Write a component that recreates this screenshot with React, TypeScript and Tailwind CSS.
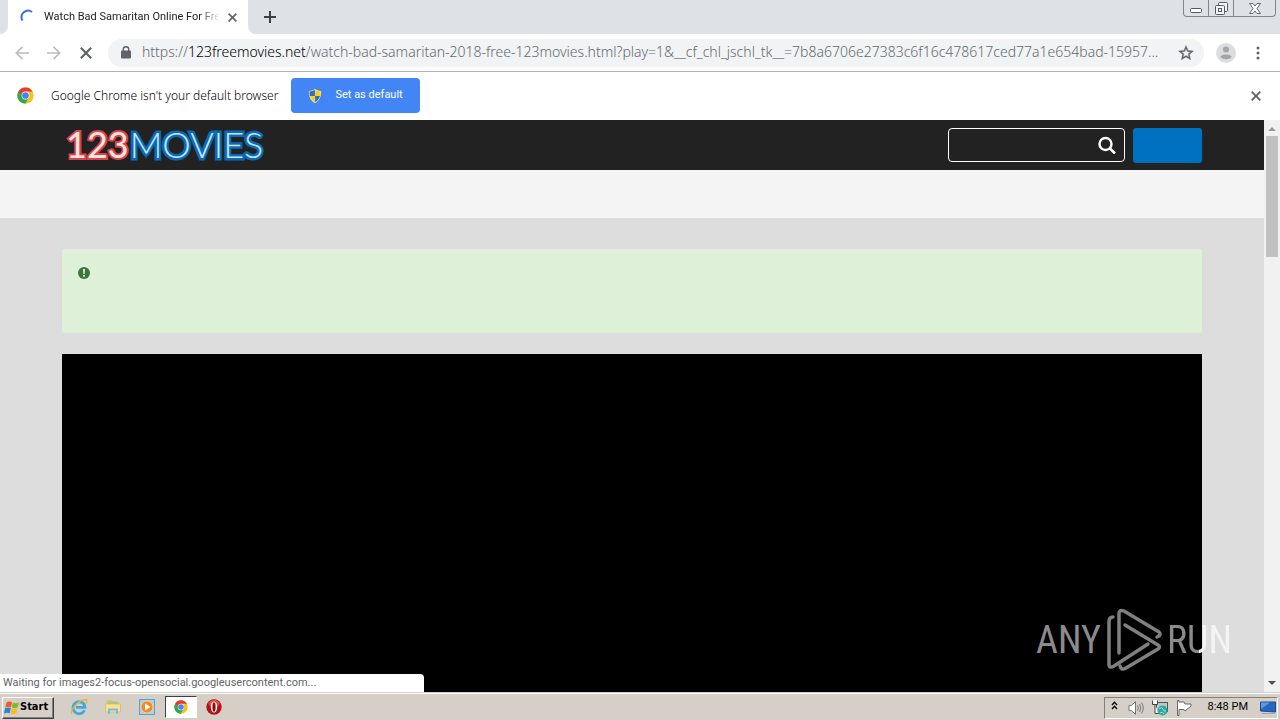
import React from "react";

const UI_FONT = "font-['Roboto','Noto_Sans',sans-serif]";

function ChromeLogo({ className }: { className: string }) {
  return (
    <svg viewBox="0 0 48 48" className={className} aria-hidden="true">
      <circle cx="24" cy="24" r="23" fill="#fbc116" />
      <path d="M24 24 L4 12.5 A23 23 0 0 1 44 13 L24 13Z" fill="#e33b2e" />
      <path d="M4 12.5 A23 23 0 0 0 23 47 L33.5 29.5 L24 24 L14.500 29.500Z" fill="#2da94f" />
      <path d="M4 12.500 L14.500 29.500 L24 24 L24 13Z" fill="#e33b2e" />
      <path d="M4 12.500 L14.500 29.500 L20 26Z" fill="#2da94f" />
      <circle cx="24" cy="24" r="11" fill="#fff" />
      <circle cx="24" cy="24" r="9.500" fill="#4285f4" />
    </svg>
  );
}

function Shield() {
  return (
    <svg viewBox="0 0 16 16" className="size-4" aria-hidden="true">
      <path d="M8 0.500 C6 2 4 2.500 1.500 2.500 C1.200 8.500 3 13 8 15.500 C13 13 14.800 8.500 14.500 2.500 C12 2.500 10 2 8 .5Z" fill="#dfe6ea" stroke="#5d6b73" strokeWidth=".6" />
      <path d="M7.900 1.800 C6.500 2.800 4.500 3.400 2.500 3.500 C2.400 5.200 2.600 6.500 2.900 7.900 H7.900Z" fill="#2c6fc0" />
      <path d="M8.100 1.800 C9.500 2.800 11.500 3.400 13.500 3.500 C13.600 5.200 13.400 6.500 13.100 7.900 H8.100Z" fill="#fcd116" />
      <path d="M7.900 14.300 C5.300 12.800 3.700 10.700 3 8.100 H7.900Z" fill="#fcd116" />
      <path d="M8.100 14.300 C10.700 12.800 12.300 10.700 13 8.100 H8.100Z" fill="#2c6fc0" />
    </svg>
  );
}

function Cross({ className }: { className: string }) {
  return (
    <svg viewBox="0 0 10 10" className={className} fill="none" stroke="currentColor" strokeWidth="1.800" aria-hidden="true">
      <path d="M.7 .7 L9.300 9.300 M9.300 .7 L.7 9.300" />
    </svg>
  );
}

function TabStrip() {
  return (
    <div className="flex h-[34px] shrink-0 items-stretch bg-[#dee1e6] pl-2">
      <div className="relative flex w-60 items-center bg-white pr-[11px] pl-3">
        <svg viewBox="0 0 8 8" className="absolute bottom-0 -left-2 size-2" aria-hidden="true">
          <path d="M8 0 V8 H0 A8 8 0 0 0 8 0Z" fill="#fff" />
        </svg>
        <svg viewBox="0 0 8 8" className="absolute -right-2 bottom-0 size-2" aria-hidden="true">
          <path d="M0 0 V8 H8 A8 8 0 0 1 0 0Z" fill="#fff" />
        </svg>
        <svg viewBox="0 0 16 16" className="size-4" fill="none" stroke="#3b6fe0" strokeWidth="2" aria-hidden="true">
          <path d="M2.500 11.500 A6.500 6.500 0 0 1 12 3" />
        </svg>
        <span className="ml-2 min-w-0 flex-1 overflow-hidden text-[11px] whitespace-nowrap text-[#202124] [mask-image:linear-gradient(to_right,black_88%,transparent)]">
          Watch Bad Samaritan Online For Free
        </span>
        <button type="button" aria-label="Close tab" className="ml-2 text-[#5f6368]">
          <Cross className="size-[9px]" />
        </button>
      </div>
      <button type="button" aria-label="New tab" className="ml-4 self-center text-[#3c4043]">
        <svg viewBox="0 0 12 12" className="size-3" stroke="currentColor" strokeWidth="2" aria-hidden="true">
          <path d="M6 0 V12 M0 6 H12" />
        </svg>
      </button>
      <div className="mr-1 ml-auto flex h-[17px] divide-x divide-[#80868f] rounded-b-[4px] border border-t-0 border-[#80868f]">
        <button type="button" aria-label="Minimize" className="flex w-[25px] items-center justify-center pt-1">
          <svg viewBox="0 0 12 5" className="h-[5px] w-3" aria-hidden="true">
            <rect x=".5" y=".5" width="11" height="4" rx="1" fill="#fff" stroke="#555b66" />
          </svg>
        </button>
        <button type="button" aria-label="Restore" className="flex w-[25px] items-center justify-center">
          <svg viewBox="0 0 13 13" className="size-[13px]" fill="#f4f5f7" stroke="#555b66" aria-hidden="true">
            <rect x="3.500" y=".5" width="9" height="9" rx="1" />
            <rect x=".5" y="3.500" width="9" height="9" rx="1" />
            <rect x="3.500" y="6.500" width="3" height="3" />
          </svg>
        </button>
        <button type="button" aria-label="Close window" className="flex w-[41px] items-center justify-center">
          <svg viewBox="0 0 12 11" className="h-[11px] w-3" aria-hidden="true">
            <path d="M.5 .5 H4 L6 3 L8 .5 H11.500 L8 5.500 L11.500 10.500 H8 L6 8 L4 10.500 H.5 L4 5.500Z" fill="#fff" stroke="#555b66" strokeWidth=".9" />
          </svg>
        </button>
      </div>
    </div>
  );
}

function Toolbar() {
  return (
    <div className="flex h-[38px] shrink-0 items-center border-b border-[#b0b2b5] bg-white pl-[15px]">
      <button type="button" aria-label="Back" className="text-[#babcbe]">
        <svg viewBox="0 0 14 14" className="size-[14px]" fill="none" stroke="currentColor" strokeWidth="1.700" aria-hidden="true">
          <path d="M14 7 H1.500 M7.500 .8 L1.300 7 L7.500 13.200" />
        </svg>
      </button>
      <button type="button" aria-label="Forward" className="ml-[18px] text-[#babcbe]">
        <svg viewBox="0 0 14 14" className="size-[14px]" fill="none" stroke="currentColor" strokeWidth="1.700" aria-hidden="true">
          <path d="M0 7 H12.500 M6.500 .8 L12.700 7 L6.500 13.200" />
        </svg>
      </button>
      <button type="button" aria-label="Stop loading" className="ml-[19px] text-[#5f6368]">
        <Cross className="size-3" />
      </button>
      <div className="ml-4 flex h-7 min-w-0 flex-1 items-center rounded-full bg-[#f1f3f4] pr-[9px] pl-[13px]">
        <svg viewBox="0 0 10 13" className="h-[13px] w-[10px] shrink-0" aria-hidden="true">
          <rect x="0" y="4.500" width="10" height="8" rx="1" fill="#5f6368" />
          <path d="M2.300 5 V3.300 A2.700 2.500 0 0 1 7.700 3.300 V5" fill="none" stroke="#5f6368" strokeWidth="1.400" />
        </svg>
        <div className="ml-[11px] min-w-0 flex-1 overflow-hidden pb-[2px] font-['Noto_Sans',sans-serif] text-[14px] leading-5 font-light whitespace-nowrap text-[#666a6e]">
          https://<span className="text-black">123freemovies.net</span>
          /watch-bad-samaritan-2018-free-123movies.html?play=1&amp;__cf_chl_jschl_tk__=7b8a6706e27383c6f16c478617ced77a1e654bad-15957...
        </div>
        <button type="button" aria-label="Bookmark this page" className="ml-2">
          <svg viewBox="0 0 24 24" className="size-[18px]" aria-hidden="true">
            <path fill="#5f6368" stroke="#5f6368" strokeWidth=".5" d="M22 9.240l-7.190-.62L12 2 9.190 8.630 2 9.240l5.460 4.730L5.820 21 12 17.270 18.180 21l-1.630-7.030L22 9.240zM12 15.400l-3.760 2.270 1-4.280-3.320-2.880 4.380-.38L12 6.100l1.710 4.040 4.380.38-3.320 2.880 1 4.280L12 15.400z" />
          </svg>
        </button>
      </div>
      <button type="button" aria-label="Profile" className="ml-3">
        <svg viewBox="0 0 20 20" className="size-5" aria-hidden="true">
          <circle cx="10" cy="10" r="10" fill="#dcdddf" />
          <circle cx="10" cy="6.500" r="3" fill="#a3a5a8" />
          <path d="M4.500 14 C4.500 10.500 15.500 10.500 15.500 14 C14 17 6 17 4.500 14Z" fill="#a3a5a8" />
        </svg>
      </button>
      <button type="button" aria-label="Menu" className="mr-5 ml-5">
        <svg viewBox="0 0 4 14" className="h-[14px] w-1" fill="#5f6368" aria-hidden="true">
          <circle cx="2" cy="2" r="1.500" />
          <circle cx="2" cy="7" r="1.500" />
          <circle cx="2" cy="12" r="1.500" />
        </svg>
      </button>
    </div>
  );
}

function InfoBar() {
  return (
    <div className="flex h-12 shrink-0 items-center bg-white pr-[19px] pb-px pl-[17px]">
      <ChromeLogo className="size-[17px]" />
      <span className="ml-[17px] font-['Noto_Sans',sans-serif] text-[12px] font-light whitespace-nowrap text-black">
        Google Chrome isn't your default browser
      </span>
      <button type="button" className="ml-[13px] flex h-[35px] items-center rounded-[4px] bg-[#4285f4] px-4 text-[11px] text-white">
        <Shield />
        <span className="mr-px ml-3">Set as default</span>
      </button>
      <button type="button" aria-label="Dismiss" className="ml-auto text-[#5f6368]">
        <Cross className="size-[10px]" />
      </button>
    </div>
  );
}

function SiteHeader() {
  return (
    <header className="flex h-[50px] items-center bg-[#222] px-[62px]">
      <a href="#home" className="flex pb-[2px] pl-1 font-['Lato',sans-serif] text-[36px] leading-none [paint-order:stroke_fill]">
        <span className="text-[#ffe3df] [-webkit-text-stroke:4px_#d9444a]">123</span>
        <span className="ml-px font-light text-[#c4e6fb] [-webkit-text-stroke:5px_#0a6ab6]">MOVIES</span>
      </a>
      <form className="ml-auto flex items-center gap-2">
        <div className="flex h-[34px] w-[177px] items-center rounded-[4px] border border-white pr-2">
          <input type="text" aria-label="Search" className="h-full min-w-0 flex-1 bg-transparent px-2 text-white outline-none" />
          <button type="button" aria-label="Search movies">
            <svg viewBox="0 0 18 18" className="size-[18px]" fill="none" stroke="#fff" aria-hidden="true">
              <circle cx="7.500" cy="8" r="6" strokeWidth="2.400" />
              <path d="M11.800 12.300 L17 17.500" strokeWidth="2.600" />
            </svg>
          </button>
        </div>
        <button type="button" aria-label="Log in" className="h-[35px] w-[69px] rounded-[3px] bg-[#0070c0]" />
      </form>
    </header>
  );
}

function Scrollbar() {
  return (
    <div className="flex w-4 shrink-0 flex-col items-center bg-[#f1f1f1]">
      <svg viewBox="0 0 16 16" className="size-4 shrink-0" aria-hidden="true">
        <path d="M4 11 L8 7 L12 11Z" fill="#9b9b9b" />
      </svg>
      <div className="h-[121px] w-3 bg-[#c1c1c1]" />
      <svg viewBox="0 0 16 16" className="mt-auto size-4 shrink-0" aria-hidden="true">
        <path d="M4 5 L8 9 L12 5Z" fill="#505050" />
      </svg>
    </div>
  );
}

function Watermark() {
  return (
    <div className="absolute right-12 bottom-5 flex items-center font-['Roboto_Condensed','DejaVu_Sans_Condensed',sans-serif] text-[38px] leading-none text-[#8b8b8b]">
      <span>ANY</span>
      <svg viewBox="0 0 56 64" className="mr-1 ml-[6px] h-16 w-14" fill="none" stroke="#808080" strokeWidth="3.500" strokeLinecap="round" strokeLinejoin="round" aria-hidden="true">
        <path d="M6 9 Q2 9 2 14 V56 Q2 61 7 58 L41 36" />
        <path d="M12 45 V6 Q12 1 17 3 L52 24 Q55 27 50 29" />
        <path d="M18 17 L51 37 Q54 39 51 41 L19 60 Q14 63 13 58" />
      </svg>
      <span className="bg-[linear-gradient(to_right,#8b8b8b_50%,#f4f4f4_50%)] bg-clip-text text-transparent">RUN</span>
    </div>
  );
}

function Page() {
  return (
    <div className="relative flex min-h-0 flex-1 overflow-hidden">
      <div className="flex min-w-0 flex-1 flex-col bg-[#ddd]">
        <SiteHeader />
        <nav aria-label="Main" className="h-12 shrink-0 bg-[#f4f4f4]" />
        <main className="flex min-h-0 flex-1 flex-col px-[62px] pt-[31px]">
          <div role="status" className="h-[84px] shrink-0 rounded-[2px] bg-[#dff0d8] pt-[18px] pl-4">
            <svg viewBox="0 0 12 12" className="size-3" aria-hidden="true">
              <circle cx="6" cy="6" r="6" fill="#3c763d" />
              <path d="M5 2 H7 L6.700 7 H5.300Z M5.100 8 H6.900 V9.700 H5.100Z" fill="#dff0d8" />
            </svg>
          </div>
          <div className="mt-[21px] flex-1 bg-black" />
        </main>
      </div>
      <Scrollbar />
      <Watermark />
      <div className="absolute bottom-0 left-0 flex h-[18px] w-[424px] items-center rounded-tr-[4px] bg-white pl-[3px] text-[11px] text-[#5f6368]">
        Waiting for images2-focus-opensocial.googleusercontent.com...
      </div>
    </div>
  );
}

function Taskbar() {
  return (
    <footer className="flex h-7 shrink-0 items-center border-t border-[#d4d0c8] bg-[#d6cfc8] pl-[2px] shadow-[inset_0_1px_0_#fff]">
      <button type="button" className="mt-[2px] flex h-[22px] w-[52px] items-center border border-t-white border-r-[#404040] border-b-[#404040] border-l-white pl-[1px] font-['DejaVu_Sans_Condensed','DejaVu_Sans',sans-serif] text-[11px] font-bold text-black shadow-[inset_-1px_-1px_0_#808080]">
        <svg viewBox="0 0 16 16" className="size-4 shrink-0" aria-hidden="true">
          <path d="M2.500 2.500 Q5 .8 8 2.200 L7 7.200 Q4 6 1.300 7.500Z" fill="#ee5a24" />
          <path d="M8.800 2.500 Q12 4 15 2.300 L13.800 7.300 Q11 8.900 7.800 7.500Z" fill="#7cba2c" />
          <path d="M1.100 8.300 Q4 6.900 6.800 8.100 L5.700 13.200 Q3 12 0 13.400Z" fill="#2a83d4" />
          <path d="M7.600 8.400 Q11 9.800 13.600 8.200 L12.400 13.200 Q9.500 15 6.500 13.500Z" fill="#fbbc17" />
        </svg>
        Start
      </button>
      <button type="button" aria-label="Internet Explorer" className="ml-4">
        <svg viewBox="0 0 18 18" className="size-[18px]" fill="none" aria-hidden="true">
          <path d="M14.500 12.200 A6 6 0 1 1 15 9.300 H6" stroke="#3fa9e4" strokeWidth="2.800" />
          <path d="M2 16 C-1 13 9 1.500 16 1.500 C17.600 2 17 4 16 5.500" stroke="#e3ba35" strokeWidth="1.400" />
        </svg>
      </button>
      <button type="button" aria-label="File Explorer" className="ml-[17px]">
        <svg viewBox="0 0 16 16" className="size-4" aria-hidden="true">
          <path d="M1 3 L2 1 H7 L8 2.500 H14 V6 H1Z" fill="#e9c65a" />
          <rect x="3" y="2.500" width="9" height="4" fill="#9cc8a5" />
          <path d="M.5 5 H15.500 V13 H.5Z" fill="#f9e391" stroke="#d9b451" strokeWidth=".7" />
          <path d="M3 15 V9.500 H13 V15 H11 V11.500 H5 V15Z" fill="#78bce7" />
        </svg>
      </button>
      <button type="button" aria-label="Media Player" className="ml-[18px]">
        <svg viewBox="0 0 16 16" className="size-4" aria-hidden="true">
          <rect x=".5" y=".5" width="15" height="15" fill="#a9d1ee" stroke="#629ecb" />
          <circle cx="8" cy="8" r="6" fill="#f58a1f" stroke="#fbd5a3" strokeWidth=".8" />
          <path d="M6 4.500 L11.500 8 L6 11.500Z" fill="#fff" />
        </svg>
      </button>
      <button type="button" aria-label="Google Chrome" className="mt-[1px] ml-[10px] flex h-[22px] w-8 items-center justify-center border border-t-[#404040] border-r-white border-b-white border-l-[#404040] bg-white">
        <ChromeLogo className="size-[14px]" />
      </button>
      <button type="button" aria-label="Opera" className="ml-[9px]">
        <svg viewBox="0 0 16 16" className="size-4" aria-hidden="true">
          <circle cx="8" cy="8" r="7.700" fill="#b41216" />
          <ellipse cx="8" cy="4.500" rx="5.500" ry="3.500" fill="#df4b45" />
          <ellipse cx="8" cy="8" rx="3.200" ry="5.600" fill="#fff" />
          <ellipse cx="8" cy="8" rx="1.600" ry="4.700" fill="#8e0b10" />
        </svg>
      </button>
      <div className="mt-[2px] mr-[2px] ml-auto flex h-[22px] items-center border border-t-[#808080] border-r-white border-b-white border-l-[#808080] pr-[1px] pl-[6px]">
        <button type="button" aria-label="Show hidden icons" className="pb-1">
          <svg viewBox="0 0 7 9" className="h-[9px] w-[7px]" fill="none" stroke="#000" strokeWidth="1.300" aria-hidden="true">
            <path d="M1 4 L3.500 1.200 L6 4 M1 8 L3.500 5.200 L6 8" />
          </svg>
        </button>
        <svg viewBox="0 0 16 16" className="ml-[10px] size-4" fill="none" stroke="#777" role="img" aria-label="Volume">
          <path d="M1 5.500 H3.500 L7.500 1.500 V14.500 L3.500 10.500 H1Z" fill="#fff" />
          <path d="M9.500 5.500 Q11 8 9.500 10.500 M11.500 4 Q14 8 11.500 12 M13.500 2.500 Q17 8 13.500 13.500" />
        </svg>
        <svg viewBox="0 0 16 16" className="ml-2 size-4" role="img" aria-label="Network">
          <rect x="4.500" y="2.500" width="11" height="9" fill="#b9c9cc" stroke="#555" />
          <path d="M.5 .5 V4.500 H5.500 V.5 M3 4.500 V13.500 H7" fill="#fff" stroke="#444" />
          <circle cx="10.500" cy="10.500" r="5" fill="#2fa8a0" />
          <path d="M7 9 Q10 6 11 9 T14 11 M8 13 Q11 11 12 14" fill="none" stroke="#9be3c9" />
        </svg>
        <svg viewBox="0 0 16 16" className="ml-2 size-4" fill="#fff" stroke="#666" role="img" aria-label="Action Center">
          <path d="M1.500 .5 V15.500 H3 V9.500 H8 L9 11 L15 6 V4 H9 L8 2 H3 V.5Z" />
        </svg>
        <time className="ml-4 text-[11px] whitespace-nowrap text-black">8:48 PM</time>
        <button type="button" aria-label="Show desktop" className="ml-3">
          <svg viewBox="0 0 16 14" className="h-[14px] w-4" aria-hidden="true">
            <path d="M.5 1 H15.500 V11 L.5 10Z" fill="#2866bd" stroke="#1e4b8f" />
            <path d="M1 1.500 H10 L1 8Z" fill="#5c9ae0" />
            <path d="M2 12.500 H15" stroke="#8fa6c4" />
          </svg>
        </button>
      </div>
    </footer>
  );
}

export default function App() {
  return (
    <div className={"flex h-screen flex-col overflow-hidden " + UI_FONT}>
      <TabStrip />
      <Toolbar />
      <InfoBar />
      <Page />
      <Taskbar />
    </div>
  );
}
